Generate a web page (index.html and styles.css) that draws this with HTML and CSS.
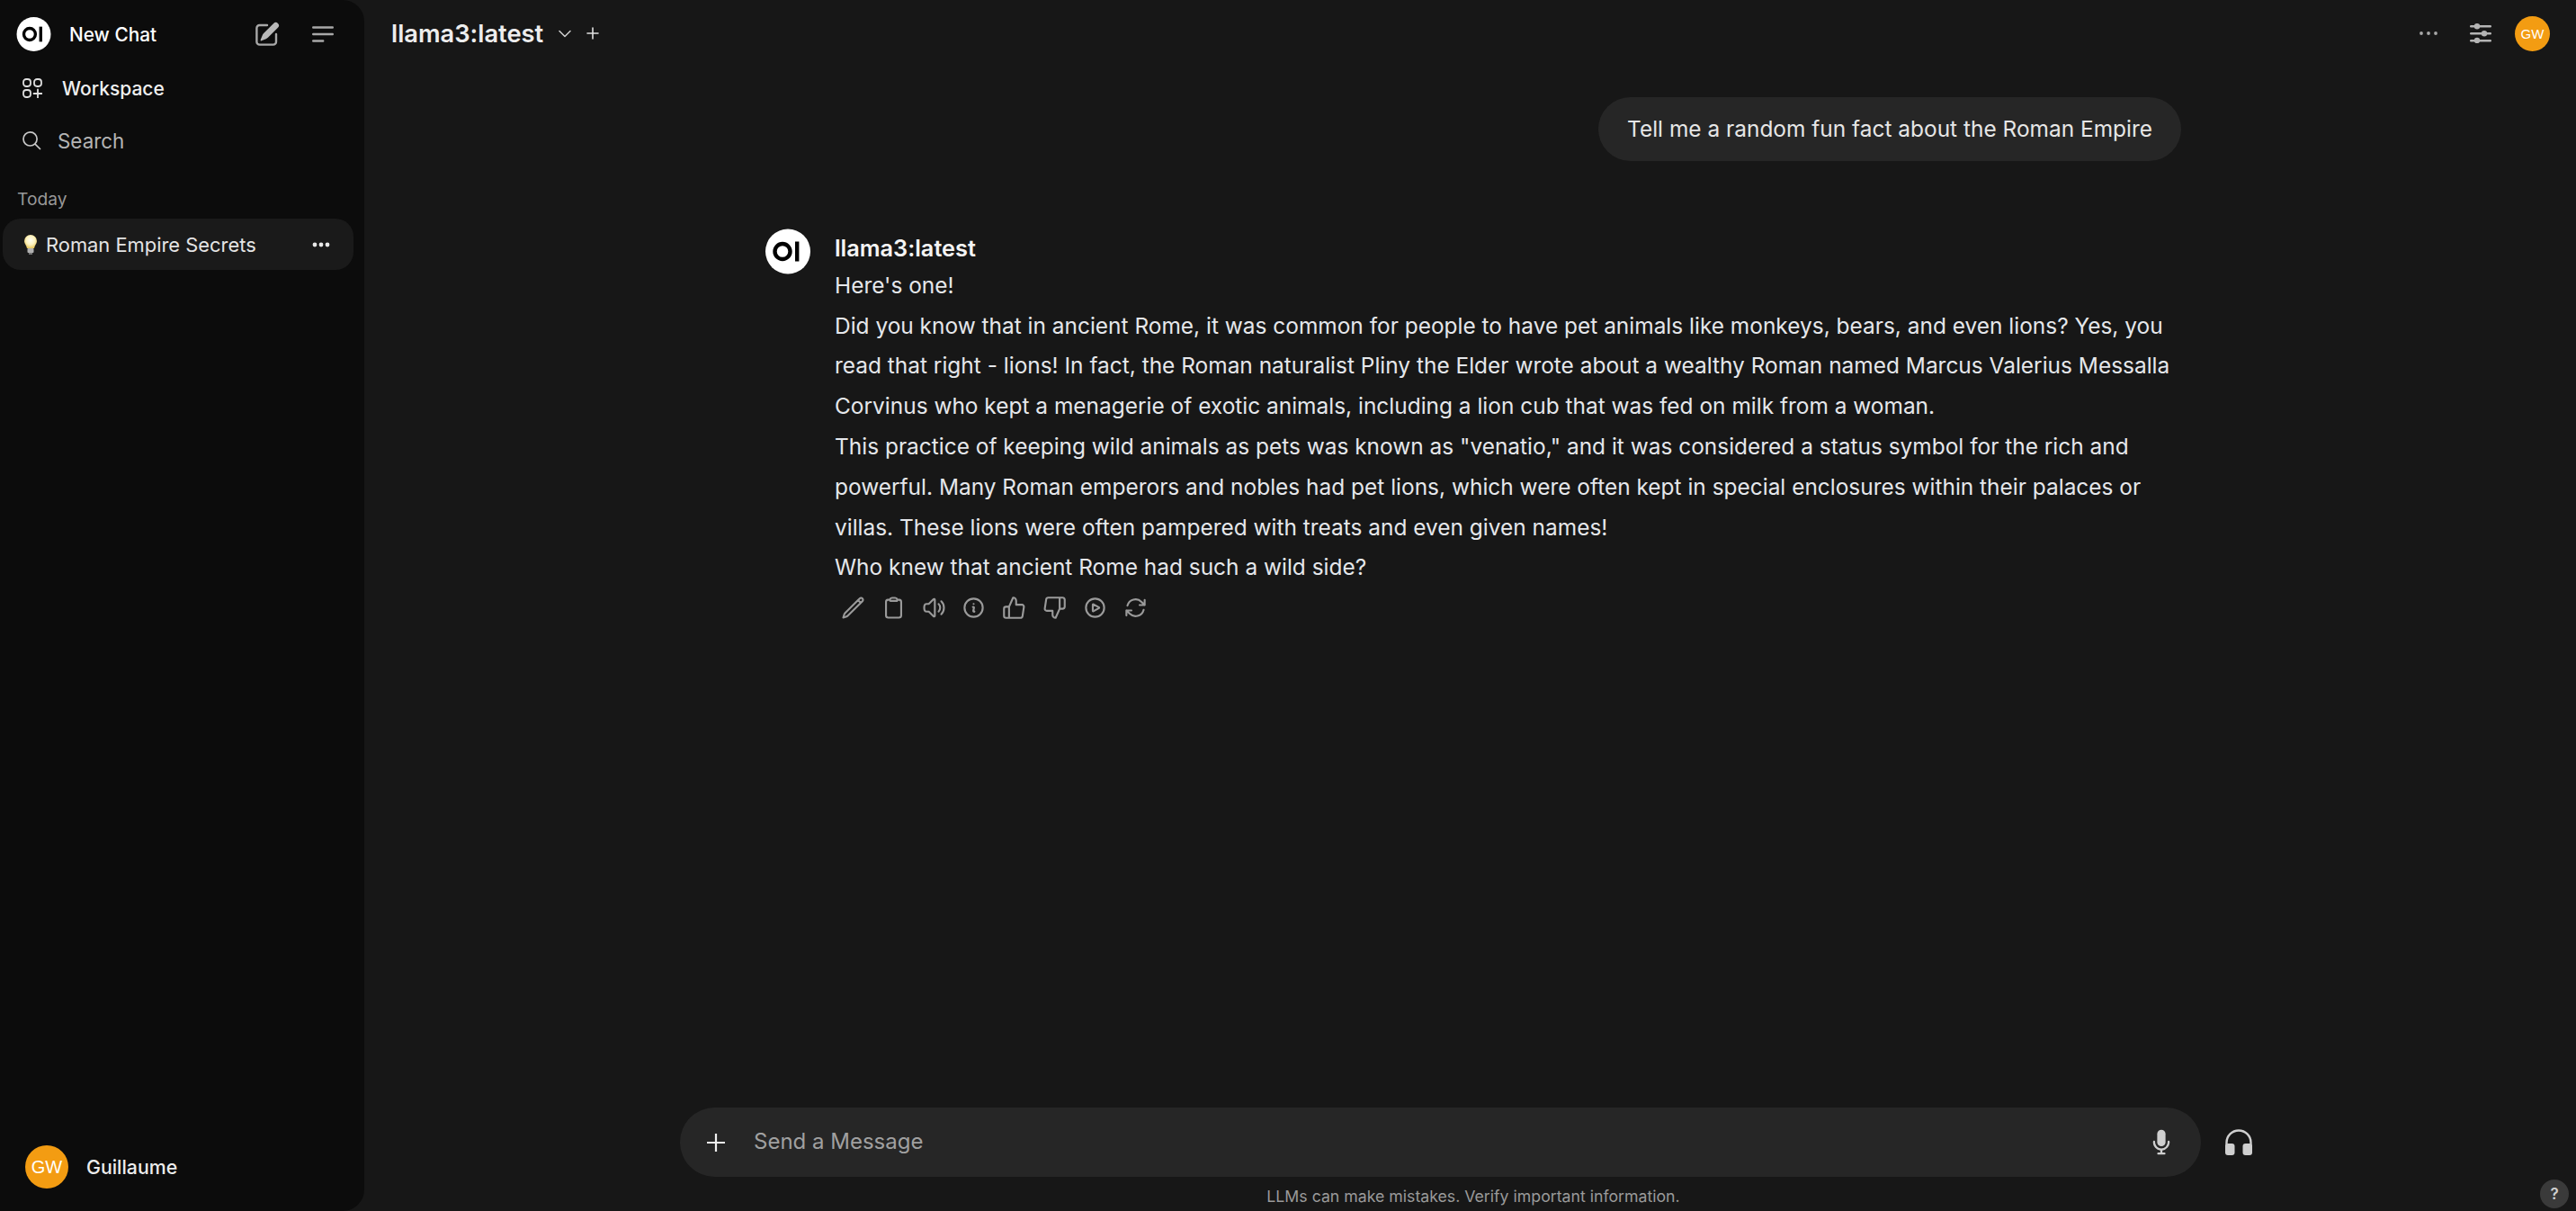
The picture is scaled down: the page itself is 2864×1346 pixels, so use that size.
FILE: index.html
```html
<!DOCTYPE html>
<html lang="en">
<head>
    <title>Roman Empire Secrets</title>
    <meta charset="utf-8">
    <link rel="stylesheet" href="styles.css">
</head>
<body>
    <aside id="sidebar">
        <div class="new-chat">
            <svg class="logo-small" viewBox="0 0 50 50"><circle cx="25" cy="25" r="25" fill="#fff"/><circle cx="19" cy="25" r="8.5" fill="none" stroke="#000" stroke-width="4.4"/><rect x="33" y="14" width="4.4" height="22" fill="#000"/></svg>
            <span class="new-chat-label">New Chat</span>
            <svg class="icon-compose" viewBox="0 0 20 20" fill="#a8a8a8"><path fill="#b8b8b8" d="M5.433 13.917l1.262-3.155A4 4 0 017.58 9.42l6.92-6.918a2.121 2.121 0 013 3l-6.92 6.918c-.383.383-.84.685-1.343.886l-3.154 1.262a.5.5 0 01-.65-.65z"/><path d="M3.5 5.75c0-.69.56-1.25 1.25-1.25H10A.75.75 0 0010 3H4.75A2.75 2.75 0 002 5.75v9.5A2.75 2.75 0 004.75 18h9.5A2.75 2.75 0 0017 15.25V10a.75.75 0 00-1.5 0v5.25c0 .69-.56 1.25-1.25 1.25h-9.5c-.69 0-1.25-.56-1.25-1.25v-9.5z"/></svg>
            <svg class="icon-menu" viewBox="0 0 24 18" fill="none" stroke="#a8a8a8" stroke-width="2.4" stroke-linecap="round"><path d="M1.2 1.5h21.600M1.200 9h21.600M1.200 16.500h11"/></svg>
        </div>
        <div class="side-link workspace">
            <svg viewBox="0 0 22 22" fill="none" stroke="#dedede" stroke-width="1.800"><rect x="1" y="1" width="8" height="8" rx="3.2"/><rect x="13" y="1" width="8" height="8" rx="3.2"/><rect x="1" y="13" width="8" height="8" rx="3.2"/><path d="M17 12.500v9M12.500 17h9" stroke-linecap="round"/></svg>
            <span>Workspace</span>
        </div>
        <div class="side-link search">
            <svg viewBox="0 0 24 24" fill="none" stroke="#c8c8c8" stroke-width="1.700" stroke-linecap="round"><path d="m21.500 21.500-5.700-5.700m0 0A7.500 7.500 0 1 0 5.196 5.196a7.500 7.500 0 0 0 10.607 10.607Z"/></svg>
            <span>Search</span>
        </div>
        <div class="side-day">Today</div>
        <div class="chat-item">
            <svg class="bulb" viewBox="0 0 14 22">
                <defs><radialGradient id="glow" cx="50%" cy="40%" r="60%"><stop offset="0" stop-color="#fffdf0"/><stop offset="0.55" stop-color="#fdf3c0"/><stop offset="1" stop-color="#e8c860"/></radialGradient></defs>
                <path d="M7 0a7 7 0 0 1 7 7c0 3-2.500 4.500-3 8H3C2.500 11.500 0 10 0 7a7 7 0 0 1 7-7z" fill="url(#glow)"/>
                <rect x="3.500" y="15" width="7" height="5" rx="1" fill="#b0b0b0"/>
                <rect x="5" y="20" width="4" height="2" fill="#707070"/>
            </svg>
            <span class="chat-title">Roman Empire Secrets</span>
            <svg class="chat-dots" viewBox="0 0 20 6" fill="#e8e8e8"><circle cx="3" cy="3" r="2.400"/><circle cx="10" cy="3" r="2.400"/><circle cx="17" cy="3" r="2.400"/></svg>
        </div>
        <div class="side-user">
            <div class="avatar avatar-big">GW</div>
            <span>Guillaume</span>
        </div>
    </aside>

    <main id="main">
        <header class="topbar">
            <span class="model-name">llama3:latest</span>
            <svg class="icon-chevron" viewBox="0 0 14 9" fill="none" stroke="#d0d0d0" stroke-width="1.500" stroke-linecap="round" stroke-linejoin="round"><path d="M1 1.500l6 6 6-6"/></svg>
            <svg class="icon-plus" viewBox="0 0 14 14" fill="none" stroke="#e0e0e0" stroke-width="1.600" stroke-linecap="round"><path d="M7 1v12M1 7h12"/></svg>
            <div class="topbar-right">
                <svg class="icon-more" viewBox="0 0 20 4" fill="#a8a8a8"><circle cx="2" cy="2" r="1.900"/><circle cx="10" cy="2" r="1.900"/><circle cx="18" cy="2" r="1.900"/></svg>
                <svg class="icon-sliders" viewBox="0 0 24 22" fill="#b4b4b4"><rect x="0" y="2" width="24" height="2.400" rx="1.200"/><rect x="0" y="10" width="24" height="2.400" rx="1.200"/><rect x="0" y="18" width="24" height="2.400" rx="1.200"/><circle cx="8" cy="3.200" r="3.200"/><circle cx="16" cy="11.200" r="3.200"/><circle cx="8" cy="19" r="3.200"/></svg>
                <div class="avatar">GW</div>
            </div>
        </header>

        <section class="thread">
            <div class="user-msg">Tell me a random fun fact about the Roman Empire</div>
            <div class="bot-msg">
                <svg class="logo-big" viewBox="0 0 50 50"><circle cx="25" cy="25" r="25" fill="#fff"/><circle cx="19" cy="25" r="8.500" fill="none" stroke="#000" stroke-width="4.400"/><rect x="33" y="14" width="4.400" height="22" fill="#000"/></svg>
                <div class="bot-body">
                    <div class="bot-name">llama3:latest</div>
                    <p>Here's one!</p>
                    <p>Did you know that in ancient Rome, it was common for people to have pet animals like monkeys, bears, and even lions? Yes, you read that right - lions! In fact, the Roman naturalist Pliny the Elder wrote about a wealthy Roman named Marcus Valerius Messalla Corvinus who kept a menagerie of exotic animals, including a lion cub that was fed on milk from a woman.</p>
                    <p>This practice of keeping wild animals as pets was known as "venatio," and it was considered a status symbol for the rich and powerful. Many Roman emperors and nobles had pet lions, which were often kept in special enclosures within their palaces or villas. These lions were often pampered with treats and even given names!</p>
                    <p>Who knew that ancient Rome had such a wild side?</p>
                    <div class="actions">
                        <svg viewBox="0 0 24 24"><path d="m16.862 4.487 1.687-1.688a1.875 1.875 0 1 1 2.652 2.652L6.832 19.820a4.500 4.500 0 0 1-1.897 1.130l-2.685.8.8-2.685a4.500 4.500 0 0 1 1.130-1.897L16.863 4.487Zm0 0L19.500 7.125"/></svg>
                        <svg viewBox="0 0 24 24"><path d="M15.666 3.888A2.250 2.250 0 0 0 13.500 2.250h-3c-1.030 0-1.900.693-2.166 1.638m7.332 0c.055.194.084.4.084.612v0a.75.75 0 0 1-.75.75H9a.75.75 0 0 1-.75-.75v0c0-.212.030-.418.084-.612m7.332 0c.646.049 1.288.11 1.927.184 1.100.128 1.907 1.077 1.907 2.185V19.500a2.250 2.250 0 0 1-2.250 2.250H6.750A2.250 2.250 0 0 1 4.500 19.500V6.257c0-1.108.806-2.057 1.907-2.185a48.208 48.208 0 0 1 1.927-.184"/></svg>
                        <svg viewBox="0 0 24 24"><path d="M19.114 5.636a9 9 0 010 12.728M16.463 8.288a5.250 5.250 0 010 7.424M6.750 8.250l4.720-4.720a.75.75 0 011.280.53v15.880a.75.75 0 01-1.280.53l-4.720-4.720H4.510c-.88 0-1.704-.507-1.938-1.354A9.010 9.010 0 012.250 12c0-.83.112-1.633.322-2.396C2.806 8.756 3.630 8.250 4.510 8.250H6.750z"/></svg>
                        <svg viewBox="0 0 24 24"><path d="M11.250 11.250l.041-.02a.75.75 0 011.063.852l-.708 2.836a.75.75 0 001.063.853l.041-.021M21 12a9 9 0 11-18 0 9 9 0 0118 0zm-9-3.750h.008v.008H12V8.250z"/></svg>
                        <svg viewBox="0 0 24 24"><path d="M14 9V5a3 3 0 0 0-3-3l-4 9v11h11.280a2 2 0 0 0 2-1.700l1.380-9a2 2 0 0 0-2-2.300zM7 22H4a2 2 0 0 1-2-2v-7a2 2 0 0 1 2-2h3"/></svg>
                        <svg viewBox="0 0 24 24"><path d="M10 15v4a3 3 0 0 0 3 3l4-9V2H5.720a2 2 0 0 0-2 1.700l-1.380 9a2 2 0 0 0 2 2.300zm7-13h2.670A2.310 2.310 0 0 1 22 4v7a2.310 2.310 0 0 1-2.330 2H17"/></svg>
                        <svg viewBox="0 0 24 24"><path d="M21 12a9 9 0 1 1-18 0 9 9 0 0 1 18 0Z"/><path d="M15.910 11.672a.375.375 0 0 1 0 .656l-5.603 3.113a.375.375 0 0 1-.557-.328V8.887c0-.286.307-.466.557-.327l5.603 3.112Z"/></svg>
                        <svg viewBox="0 0 24 24"><path d="M16.023 9.348h4.992v-.001M2.985 19.644v-4.992m0 0h4.992m-4.993 0 3.181 3.183a8.250 8.250 0 0 0 13.803-3.700M4.031 9.865a8.250 8.250 0 0 1 13.803-3.700l3.181 3.182m0-4.991v4.990"/></svg>
                    </div>
                </div>
            </div>
        </section>

        <section class="composer">
            <div class="composer-row">
                <div class="input-box">
                    <svg class="icon-add" viewBox="0 0 20 20" fill="none" stroke="#f0f0f0" stroke-width="2.200"><path d="M10 0v20M0 10h20"/></svg>
                    <span class="placeholder">Send a Message</span>
                    <svg class="icon-mic" viewBox="3.500 1 13 18" fill="#cfcfcf"><path d="M7 4a3 3 0 016 0v6a3 3 0 11-6 0V4z"/><path d="M5.500 9.643a.75.75 0 00-1.500 0V10c0 3.060 2.290 5.585 5.250 5.954V17.500h-1.500a.75.75 0 000 1.500h4.500a.75.75 0 000-1.500h-1.500v-1.546A6.001 6.001 0 0016 10v-.357a.75.75 0 00-1.500 0V10a4.500 4.500 0 01-9 0v-.357z"/></svg>
                </div>
                <svg class="icon-phones" viewBox="0 0 30 29" fill="#cfcfcf"><path d="M1.500 20V15a13.500 13.500 0 0127 0v5" fill="none" stroke="#cfcfcf" stroke-width="2.400"/><rect x="0" y="16" width="10.500" height="13" rx="3"/><rect x="19.500" y="16" width="10.500" height="13" rx="3"/></svg>
            </div>
            <div class="disclaimer">LLMs can make mistakes. Verify important information.</div>
        </section>
    </main>

    <div class="help">?</div>
</body>
</html>
```

FILE: styles.css
```css
body {
    margin: 0;
    height: 100vh;
    overflow: hidden;
    display: flex;
    background: #171717;
    color: #fff;
    font-family: Inter, "Noto Sans", sans-serif;
}

svg {
    display: block;
    flex: none;
}

/* sidebar */
#sidebar {
    width: 405px;
    margin-right: 7px;
    flex: none;
    display: flex;
    flex-direction: column;
    background: #0c0c0c;
    border-radius: 0 24px 24px 0;
}

.new-chat {
    display: flex;
    align-items: center;
    height: 38px;
    margin-top: 19px;
    padding-left: 18px;
}

.logo-small {
    width: 39px;
    height: 38px;
}

.new-chat-label {
    margin-left: 20px;
    font-size: 20.800px;
    font-weight: 500;
    width: 204px;
}

.icon-compose {
    width: 32px;
    height: 32px;
}

.icon-menu {
    width: 24px;
    height: 18px;
    margin-left: 34px;
}

.side-link {
    display: flex;
    align-items: center;
    height: 40px;
    font-size: 21px;
}

.workspace {
    margin-top: 21px;
    padding-left: 25px;
    font-weight: 500;
    color: #f0f0f0;
}

.workspace svg {
    width: 22px;
    height: 22px;
    margin-right: 22px;
}

.search {
    margin-top: 18px;
    padding-left: 23px;
    font-size: 22.400px;
    color: #b4b4b4;
}

.search svg {
    width: 24px;
    height: 24px;
    margin-right: 17px;
}

.side-day {
    margin: 31px 0 0 19px;
    height: 28px;
    line-height: 28px;
    font-size: 19.200px;
    color: #999;
}

.chat-item {
    display: flex;
    align-items: center;
    height: 57px;
    margin: 8px 12px 0 3px;
    padding: 0 26px 0 24px;
    border-radius: 20px;
    background: #1a1a1a;
    font-size: 21.900px;
    color: #e4e4e4;
}

.bulb {
    width: 14px;
    height: 22px;
}

.chat-title {
    flex: 1;
    margin-left: 10px;
}

.chat-dots {
    width: 20px;
    height: 6px;
}

.side-user {
    display: flex;
    align-items: center;
    margin-top: auto;
    margin-bottom: 25px;
    padding-left: 28px;
    gap: 20px;
    font-size: 21.300px;
    font-weight: 500;
    color: #ececec;
}

.avatar {
    width: 39px;
    height: 39px;
    border-radius: 50%;
    background: #f39c12;
    display: flex;
    align-items: center;
    justify-content: center;
    font-family: "Liberation Sans", sans-serif;
    font-size: 15px;
    color: #fff;
}

.avatar-big {
    width: 48px;
    height: 48px;
    font-size: 20px;
    font-weight: 400;
}

/* main column */
#main {
    flex: 1;
    min-width: 0;
    display: flex;
    flex-direction: column;
}

.topbar {
    height: 74px;
    flex: none;
    display: flex;
    align-items: center;
    padding: 0 29px 0 23px;
}

.model-name {
    font-size: 27.300px;
    font-weight: 600;
    color: #ededed;
}

.icon-chevron {
    width: 14px;
    height: 9px;
    margin-left: 17px;
}

.icon-plus {
    width: 14px;
    height: 14px;
    margin-left: 17px;
}

.topbar-right {
    margin-left: auto;
    display: flex;
    align-items: center;
}

.icon-more {
    width: 20px;
    height: 4px;
}

.icon-sliders {
    width: 24px;
    height: 22px;
    margin: 0 26px 0 36px;
}

/* messages */
.thread {
    flex: 1;
    width: 1574px;
    margin: 0 auto;
    padding-top: 34px;
    font-size: 24.450px;
    line-height: 44.800px;
    color: #e5e7eb;
}

.user-msg {
    width: fit-content;
    margin-left: auto;
    padding: 13px 32px;
    border-radius: 36px;
    background: #262626;
    color: #e6e6e6;
}

.bot-msg {
    display: flex;
    gap: 27px;
    margin-top: 75px;
}

.logo-big {
    width: 50px;
    height: 51px;
}

.bot-body {
    flex: 1;
}

.bot-name {
    padding-top: 4px;
    height: 37px;
    line-height: 36px;
    font-size: 25.300px;
    font-weight: 600;
    color: #f4f4f4;
}

.bot-body p {
    margin: 0;
}

.actions {
    display: flex;
    margin: 9px 0 0 7px;
    gap: 17.800px;
}

.actions svg {
    width: 27px;
    height: 27px;
    fill: none;
    stroke: #9a9a9a;
    stroke-width: 1.900;
    stroke-linecap: round;
    stroke-linejoin: round;
}

/* input at the bottom */
.composer {
    flex: none;
}

.composer-row {
    display: flex;
    align-items: center;
    width: 1764px;
    margin: 0 auto;
}

.input-box {
    width: 1691px;
    height: 77px;
    display: flex;
    align-items: center;
    padding: 0 34px 0 30px;
    box-sizing: border-box;
    border-radius: 39px;
    background: #262626;
    font-size: 24px;
}

.icon-add {
    width: 20px;
    height: 20px;
}

.placeholder {
    flex: 1;
    margin-left: 32px;
    padding-bottom: 2px;
    color: #a0a0a0;
}

.icon-mic {
    width: 20px;
    height: 29px;
}

.icon-phones {
    width: 30px;
    height: 29px;
    margin-left: 27px;
}

.disclaimer {
    padding-top: 6px;
    height: 32px;
    line-height: 32px;
    text-align: center;
    font-size: 17.700px;
    color: #9a9a9a;
}

.help {
    position: absolute;
    right: 8px;
    bottom: 3px;
    width: 32px;
    height: 32px;
    border-radius: 50%;
    background: #3a3a3a;
    display: flex;
    align-items: center;
    justify-content: center;
    font-size: 17px;
    font-weight: 600;
    color: #d0d0d0;
}
```
